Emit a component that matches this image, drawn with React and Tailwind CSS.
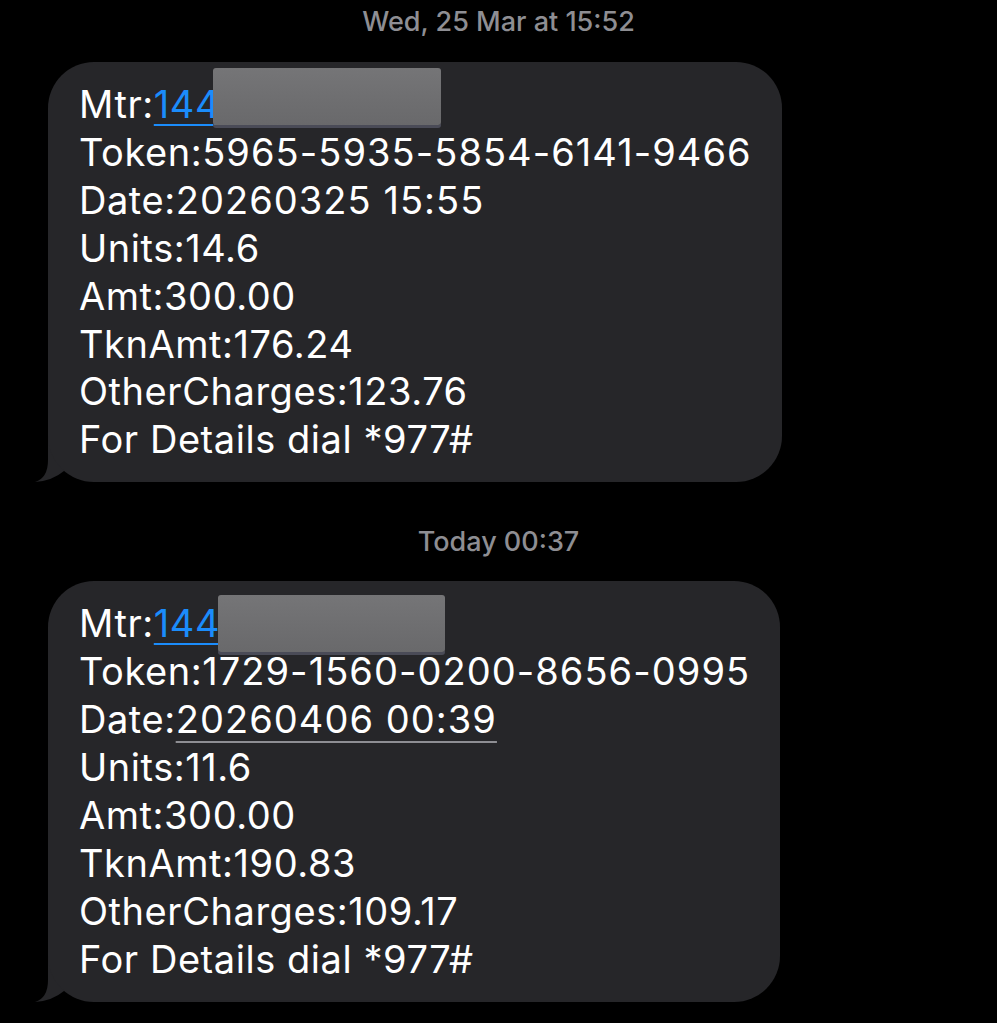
import React from 'react';

const font = { fontFamily: 'Inter, "Noto Sans", sans-serif' };

const Redact = ({ className }) => (
  <div
    className={`absolute rounded-[3px] bg-gradient-to-b from-[#757577] to-[#69696b] shadow-[0_3px_0_#4a4b57] ${className}`}
  />
);

// iOS-style incoming tail at the bubble's bottom-left corner
const Tail = () => (
  <svg
    className="absolute -left-[13px] bottom-0"
    width="30"
    height="50"
    viewBox="-13 -50 30 50"
  >
    <path d="M0 -50 L0 -22 Q0 -4 -13 0 Q4 -1 16 -11 L16 -50 Z" fill="#262629" />
  </svg>
);

const Bubble = ({ lines, redactClass }) => (
  <div className="relative self-start">
    <Tail />
    <div className="relative rounded-[46px] bg-[#262629] pl-[31px] pr-[30px] pt-[19px] pb-[18px] text-[38px] leading-[47.9px] tracking-[0.55px] text-white">
      {lines}
      <Redact className={redactClass} />
    </div>
  </div>
);

const Stamp = ({ children, className }) => (
  <div className={`text-center text-[27px] font-medium leading-[32px] text-[#8e8e93] ${className}`}>{children}</div>
);

const Link144 = () => (
  <span className="text-[#1b8cfb] underline decoration-[2px] underline-offset-[6px]">144</span>
);

// long digit runs sit a touch wider in the original font
const Wide = ({ children, className = '' }) => (
  <span className={`tracking-[1.05px] ${className}`}>{children}</span>
);

export default function App() {
  return (
    <div style={font} className="min-h-[1023px] w-[997px] overflow-hidden bg-black">
      <div className="flex flex-col pl-[48px]">
        <Stamp className="pt-[6px] pr-[48px]">Wed, 25 Mar at 15:52</Stamp>
        <div className="mt-[24px] flex flex-col">
          <Bubble
            redactClass="left-[165px] top-[6px] h-[57px] w-[228px]"
            lines={
              <>
                <div>Mtr:<Link144 /></div>
                <div>Token:<Wide>5965-5935-5854-6141-9466</Wide></div>
                <div>Date:<Wide>20260325 15:55</Wide></div>
                <div>Units:14.6</div>
                <div>Amt:300.00</div>
                <div>TknAmt:176.24</div>
                <div>OtherCharges:123.76</div>
                <div>For Details dial *977#</div>
              </>
            }
          />
        </div>
        <Stamp className="mt-[44px] pr-[48px]">Today 00:37</Stamp>
        <div className="mt-[23px] flex flex-col">
          <Bubble
            redactClass="left-[170px] top-[14px] h-[57px] w-[227px]"
            lines={
              <>
                <div>Mtr:<Link144 /></div>
                <div>Token:<Wide>1729-1560-0200-8656-0995</Wide></div>
                <div>
                  Date:
                  <Wide className="underline decoration-[#8e8e93] decoration-[2px] underline-offset-[8px]">
                    20260406 00:39
                  </Wide>
                </div>
                <div>Units:11.6</div>
                <div>Amt:300.00</div>
                <div>TknAmt:190.83</div>
                <div>OtherCharges:109.17</div>
                <div>For Details dial *977#</div>
              </>
            }
          />
        </div>
      </div>
    </div>
  );
}
